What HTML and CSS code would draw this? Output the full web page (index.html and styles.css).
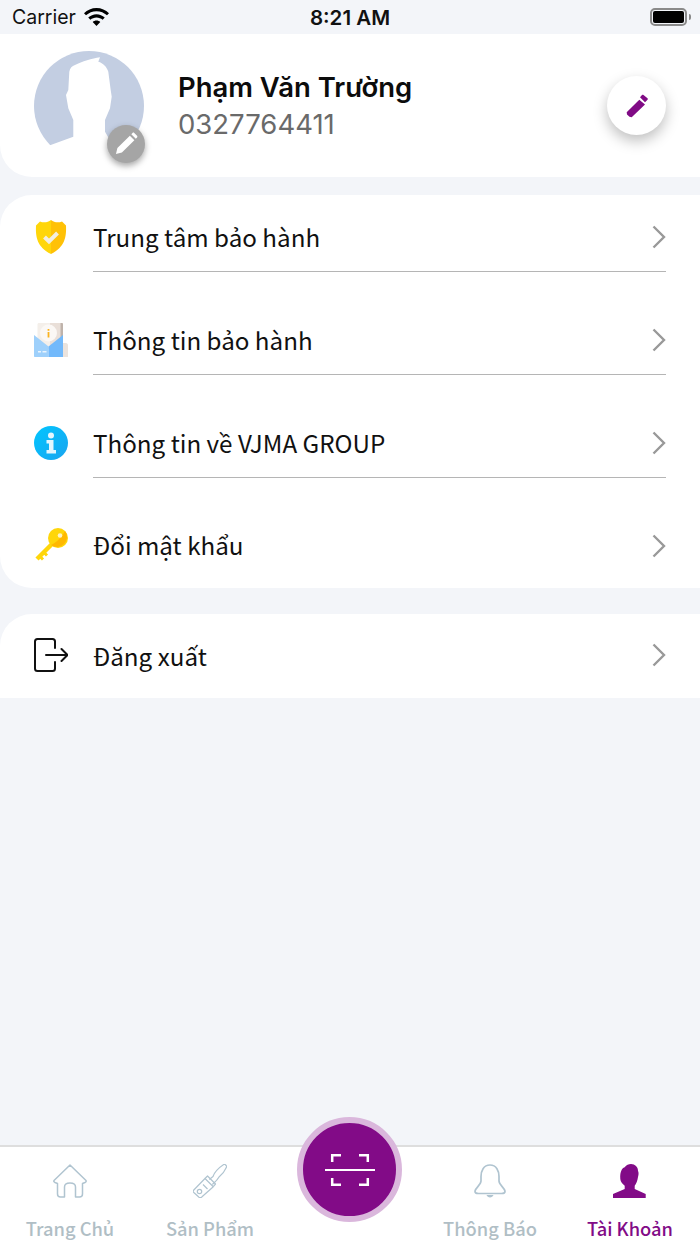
FILE: index.html
```html
<!DOCTYPE html>
<html lang="vi">
<head>
<meta charset="utf-8">
<title>Tài Khoản</title>
<link rel="stylesheet" href="styles.css">
</head>
<body>
<div class="app">
  <div class="status">
    <div class="status-left">
      <span>Carrier</span>
      <svg class="wifi" viewBox="1.800 .4 22.400 16.100"><path d="M13 3.2c3.6 0 6.9 1.400 9.400 3.700l1.800-1.900C21.300 2.200 17.300.4 13 .4S4.700 2.200 1.800 5l1.800 1.900C6.100 4.600 9.400 3.200 13 3.200z"/><path d="M13 8.800c2.100 0 4 .8 5.500 2.100l1.900-1.900C18.400 7.200 15.800 6 13 6s-5.400 1.200-7.400 3l1.900 1.900C9 9.600 10.900 8.800 13 8.800z"/><path d="M13 11.600c-1.300 0-2.500.5-3.400 1.300L13 16.500l3.400-3.600c-.9-.8-2.100-1.300-3.400-1.300z"/></svg>
    </div>
    <div class="status-time">8:21 AM</div>
    <div class="status-right">
      <div class="battery"><div class="battery-fill"></div></div>
      <div class="battery-tip"></div>
    </div>
  </div>

  <section class="profile">
    <div class="avatar">
      <svg viewBox="0 0 110 110" class="avatar-img">
        <circle cx="55" cy="55" r="55" fill="#c3cee2"/>
        <path fill="#fff" d="M16.700 94 39.300 85.700V69L34.300 57.300 32 44 34.300 39 35.300 20.700C36 17 38 15 41 14 48 10.500 58 7.500 66 6.300L64.300 10.700C69 12 73 16 74.300 20.700L76.700 39 77.700 45.700 76 57.300 71 69V80.700L77.700 92 110 100V112H0V100Z"/>
      </svg>
      <div class="avatar-badge">
        <svg viewBox="0 0 24 24"><path fill="#fff" d="M1 23l1.500-6.200L15.500 3.800l4.700 4.700L7.200 21.500zM17 2.300l1.300-1.300c.5-.5 1.300-.5 1.800 0l2.900 2.900c.5.500.5 1.300 0 1.800l-1.300 1.300z"/></svg>
      </div>
    </div>
    <div class="profile-info">
      <div class="profile-name">Phạm Văn Trường</div>
      <div class="profile-phone">0327764411</div>
    </div>
    <button class="edit-btn" type="button" aria-label="Sửa">
      <svg viewBox="0 0 24 24"><path fill="#800b85" d="M1.700 18.200 14.300 5.800 20 10.500 6.700 23.200 4.500 22.800 2 20.500zM15 3.200 17 1C17.500.5 18 .5 18.500 1L22.500 4.200C23 4.700 23 5.200 22.500 5.700L20 8.200z"/></svg>
    </button>
  </section>

  <section class="menu">
    <a class="row">
      <svg class="row-icon" viewBox="0 0 34 34">
        <path fill="#ffd60a" d="M17 0C14 2.500 9.500 3 6 1.500L2 5.500C1.500 17 3 27 17 34Z"/>
        <path fill="#ffc107" d="M17 0C20 2.500 24.500 3 28 1.500L32 5.500C32.500 17 31 27 17 34Z"/>
        <path fill="none" stroke="#f3eee0" stroke-width="4" d="M10.500 17 15 21.500 23.500 13"/>
      </svg>
      <div class="row-body"><span class="row-label">Trung tâm bảo hành</span><svg class="chevron" viewBox="0 0 14 24"><path d="M1.500 1.500 12 12 1.500 22.500"/></svg></div>
    </a>
    <a class="row">
      <svg class="row-icon" viewBox="0 0 34 34">
        <path fill="#ebe3dd" d="M29 20h3c1 0 2 1 2 2v12h-5z"/>
        <path fill="#f4efea" d="M3.500 1.500C3.500.5 4 0 5 0H16V26H3.500z"/>
        <path fill="#e9dfd8" d="M16 0h13V26H16z"/>
        <path fill="#bfb3ab" d="M26.500 0h1c1 0 1.500.5 1.500 1.500V26h-2.500z"/>
        <circle cx="14.500" cy="10" r="8.500" fill="#fbf8f5"/>
        <path fill="#fbb320" d="M13.600 6h1.800v1.800h-1.800zM13.600 9h1.800v5.500h-1.800z"/>
        <path fill="#9ed0fb" d="M0 12 14.500 23.500V34H1C.4 34 0 33.600 0 33z"/>
        <path fill="#72b9fb" d="M29 12 14.500 23.500V34H29z"/>
        <path fill="#e9f4fe" d="M4 28h3v1.500H4zM8.500 28h4v1.500h-4z"/>
      </svg>
      <div class="row-body"><span class="row-label">Thông tin bảo hành</span><svg class="chevron" viewBox="0 0 14 24"><path d="M1.500 1.500 12 12 1.500 22.500"/></svg></div>
    </a>
    <a class="row">
      <svg class="row-icon" viewBox="0 0 34 34">
        <defs><linearGradient id="info" x1="0" y1="0" x2="1" y2="1"><stop offset="0" stop-color="#00c6ff"/><stop offset="1" stop-color="#1ba4ef"/></linearGradient></defs>
        <circle cx="17" cy="17" r="17" fill="url(#info)"/>
        <circle cx="17" cy="9.500" r="3" fill="#e4f6fe"/>
        <path fill="#e4f6fe" d="M12.500 14h7v10h2.500v3.500H12.500V24H15v-6.500h-2.500z"/>
      </svg>
      <div class="row-body"><span class="row-label">Thông tin về VJMA GROUP</span><svg class="chevron" viewBox="0 0 14 24"><path d="M1.500 1.500 12 12 1.500 22.500"/></svg></div>
    </a>
    <a class="row row-last">
      <svg class="row-icon" viewBox="0 0 34 34">
        <path fill="none" stroke="#ffd60a" stroke-width="4.500" d="M21 13 3 31"/>
        <path fill="none" stroke="#ffd60a" stroke-width="3" d="M5.500 28 9 31.500M9.500 24 13 27.500"/>
        <circle cx="24" cy="10" r="10" fill="#ffd60a"/>
        <path fill="#ffb800" d="M31 3A10 10 0 0 1 17 17C22 15 28 9 31 3z"/>
        <circle cx="26" cy="7.500" r="2.300" fill="#fff3c4"/>
      </svg>
      <div class="row-body"><span class="row-label">Đổi mật khẩu</span><svg class="chevron" viewBox="0 0 14 24"><path d="M1.500 1.500 12 12 1.500 22.500"/></svg></div>
    </a>
  </section>

  <section class="logout">
    <svg class="row-icon" viewBox="0 0 34 34">
      <path fill="none" stroke="#111" stroke-width="2" stroke-linecap="round" d="M21 10V3.500C21 2 20 1 18.500 1H3.500C2 1 1 2 1 3.500v27C1 32 2 33 3.500 33h15c1.500 0 2.500-1 2.500-2.500V24"/>
      <path fill="none" stroke="#111" stroke-width="2" stroke-linecap="round" stroke-linejoin="round" d="M12 17h21M27.500 11l6 6-6 6"/>
    </svg>
    <span class="row-label">Đăng xuất</span>
    <svg class="chevron" viewBox="0 0 14 24"><path d="M1.500 1.500 12 12 1.500 22.500"/></svg>
  </section>

  <nav class="tabbar">
    <div class="tab">
      <svg class="tab-icon" viewBox="0 0 34 34"><path fill="none" stroke="#b0c4d0" stroke-width="1.500" stroke-linejoin="round" d="M17 1 33 16.500C33.500 17.500 33 18 32 18.500L29.500 19.500V30C29.500 32 28.500 33 26.500 33H22.500V23C22.500 20.500 20 19 17 19S11.500 20.500 11.500 23V33H7.500C5.500 33 4.500 32 4.500 30V19.500L2 18.500C1 18 .5 17.500 1 16.500Z"/></svg>
      <span class="tab-label">Trang Chủ</span>
    </div>
    <div class="tab">
      <svg class="tab-icon" viewBox="0 0 34 34"><g fill="none" stroke="#b0c4d0" stroke-width="1.200" stroke-linejoin="round"><path d="M.8 26 12 14.500 20.300 22.700 9 32.800C8 33.800 6.500 33.800 5.500 32.800L.8 28.500C0 27.700 0 26.800.8 26Z"/><path d="M12 14.500 14.500 12 22.500 20 20.300 22.700"/><path d="M16.300 15.500 20 12.500C21.500 8 24 5 31 .3 32 0 33.500 1.500 33.700 2.700 31.500 8 28.500 11 26 13 24.500 16 22 18 19.300 20.500"/><circle cx="6.500" cy="27.500" r="2.200"/><path d="M10 20.500 14.500 25"/></g></svg>
      <span class="tab-label">Sản Phẩm</span>
    </div>
    <div class="tab tab-spacer"></div>
    <div class="tab">
      <svg class="tab-icon" viewBox="0 0 34 34"><path fill="none" stroke="#b0c4d0" stroke-width="1.700" stroke-linejoin="round" d="M17 1C10.500 1 8 7 8 12.500V17C8 21 2 24 2 27.500C2 29 3.500 29.500 5.500 29.500H28.500C30.500 29.500 32 29 32 27.500C32 24 26 21 26 17V12.500C26 7 23.500 1 17 1Z"/><path fill="#b0c4d0" d="M13.500 31h7c-.5 1.500-2 2.500-3.500 2.500s-3-1-3.500-2.500z"/></svg>
      <span class="tab-label">Thông Báo</span>
    </div>
    <div class="tab tab-active">
      <svg class="tab-icon" viewBox="0 0 34 34"><path fill="#820b87" d="M18 0C22 0 25 3 25 6.700 26 9 25.500 11 25 13 24.500 17 23 20 21.700 21.700V25L32.700 30V34H0V30L11.700 25V21.700C9.500 20 7.500 18 7.300 15 7 11 7.500 8.500 8.300 6.700 9 5 10 4 11.700 3.300 13.500 1 15.500 0 18 0Z"/></svg>
      <span class="tab-label">Tài Khoản</span>
    </div>
    <button class="scan" type="button" aria-label="Quét mã">
      <svg viewBox="0 0 50 36"><path fill="none" stroke="#fff" stroke-width="2.500" d="M7.200 10V3.200H16M34 3.200h8.800V10M7.200 26V32.800H16M34 32.800h8.800V26"/><path fill="none" stroke="#fff" stroke-width="2.200" d="M0 18h50"/></svg>
    </button>
  </nav>
</div>
</body>
</html>
```
FILE: styles.css
```css
* { box-sizing: border-box; }
html, body { margin: 0; padding: 0; }
body { font-family: "Noto Sans CJK SC", "Noto Sans", sans-serif; color: #111; background: #f3f5f9; }
.app { width: 700px; height: 1244px; display: flex; flex-direction: column; background: #f3f5f9; overflow: hidden; }

.status { height: 34px; display: flex; align-items: center; justify-content: space-between; padding: 0 9px 0 12px; font-family: Inter, "Liberation Sans", sans-serif; font-size: 19.500px; color: #111; }
.status-left { display: flex; align-items: center; gap: 8px; width: 160px; }
.wifi { width: 25px; height: 18px; fill: #000; }
.status-time { font-weight: 600; font-size: 20.500px; }
.status-right { display: flex; align-items: center; gap: 2px; width: 163px; justify-content: flex-end; }
.battery { width: 37px; height: 18px; border: 2px solid #8a8a8a; border-radius: 5px; padding: 1px; }
.battery-fill { width: 100%; height: 100%; background: #000; border-radius: 2px; }
.battery-tip { width: 2px; height: 6px; background: #8a8a8a; border-radius: 0 2px 2px 0; }

.profile { height: 143px; background: #fff; border-radius: 0 0 0 32px; display: flex; align-items: center; padding: 0 34px; margin-bottom: 18px; }
.avatar { width: 110px; height: 110px; position: relative; }
.avatar-img { display: block; width: 110px; height: 110px; }
.avatar-badge { position: absolute; left: 73px; top: 74px; width: 38px; height: 38px; border-radius: 50%; background: #a5a5a5; box-shadow: 0 3px 6px rgba(0,0,0,.35); display: flex; align-items: center; justify-content: center; }
.avatar-badge svg { width: 23px; height: 23px; }
.profile-info { flex: 1; margin-left: 34px; margin-top: 1px; }
.profile-name { font-family: Inter, sans-serif; font-size: 27.450px; font-weight: 600; line-height: 36px; color: #0c0c0c; }
.profile-phone { font-family: Inter, sans-serif; font-size: 27.500px; line-height: 38px; color: #6a6a6a; }
.edit-btn { width: 59px; height: 59px; border: 0; padding: 0; border-radius: 50%; background: #fff; box-shadow: 0 6px 14px rgba(0,0,0,.25); display: flex; align-items: center; justify-content: center; }
.edit-btn svg { width: 24px; height: 24px; }

.menu { background: #fff; border-radius: 32px 0 0 32px; padding: 10px 34px 8px; display: flex; flex-direction: column; gap: 36px; margin-bottom: 26px; }
.row { display: flex; align-items: center; height: 67px; }
.row-last { margin-top: -1px; }
.row-icon { width: 34px; height: 34px; flex: none; margin: -3px 25px 0 0; }
.row-body { flex: 1; height: 67px; display: flex; align-items: center; justify-content: space-between; border-bottom: 1px solid #b5b5b5; }
.row-last .row-body { border-bottom: 0; }
.row-label { font-size: 24.200px; color: #111; line-height: 36px; flex: 1; margin-top: -1px; }
.row-body .row-label { margin-top: -3px; }
.chevron { width: 14px; height: 24px; flex: none; fill: none; stroke: #999; stroke-width: 2.400; margin-top: -2px; }

.logout { height: 84px; background: #fff; border-radius: 32px 0 0 0; display: flex; align-items: center; padding: 0 34px; }

.tabbar { margin-top: auto; height: 99px; background: #fff; border-top: 2px solid #dedede; display: grid; grid-template-columns: repeat(5, 140px); position: relative; }
.tab { display: flex; flex-direction: column; align-items: center; padding-top: 17px; }
.tab-icon { width: 34px; height: 34px; display: block; }
.tab-label { font-size: 18.300px; font-weight: 500; line-height: 26px; margin-top: 17px; color: #b0bec5; }
.tab-active .tab-label { color: #820b87; }
.scan { position: absolute; left: 297px; top: -30px; width: 105px; height: 105px; border-radius: 50%; border: 6.500px solid #dab7dc; background: #820b87; padding: 0; display: flex; align-items: center; justify-content: center; }
.scan svg { width: 50px; height: 36px; }
```
